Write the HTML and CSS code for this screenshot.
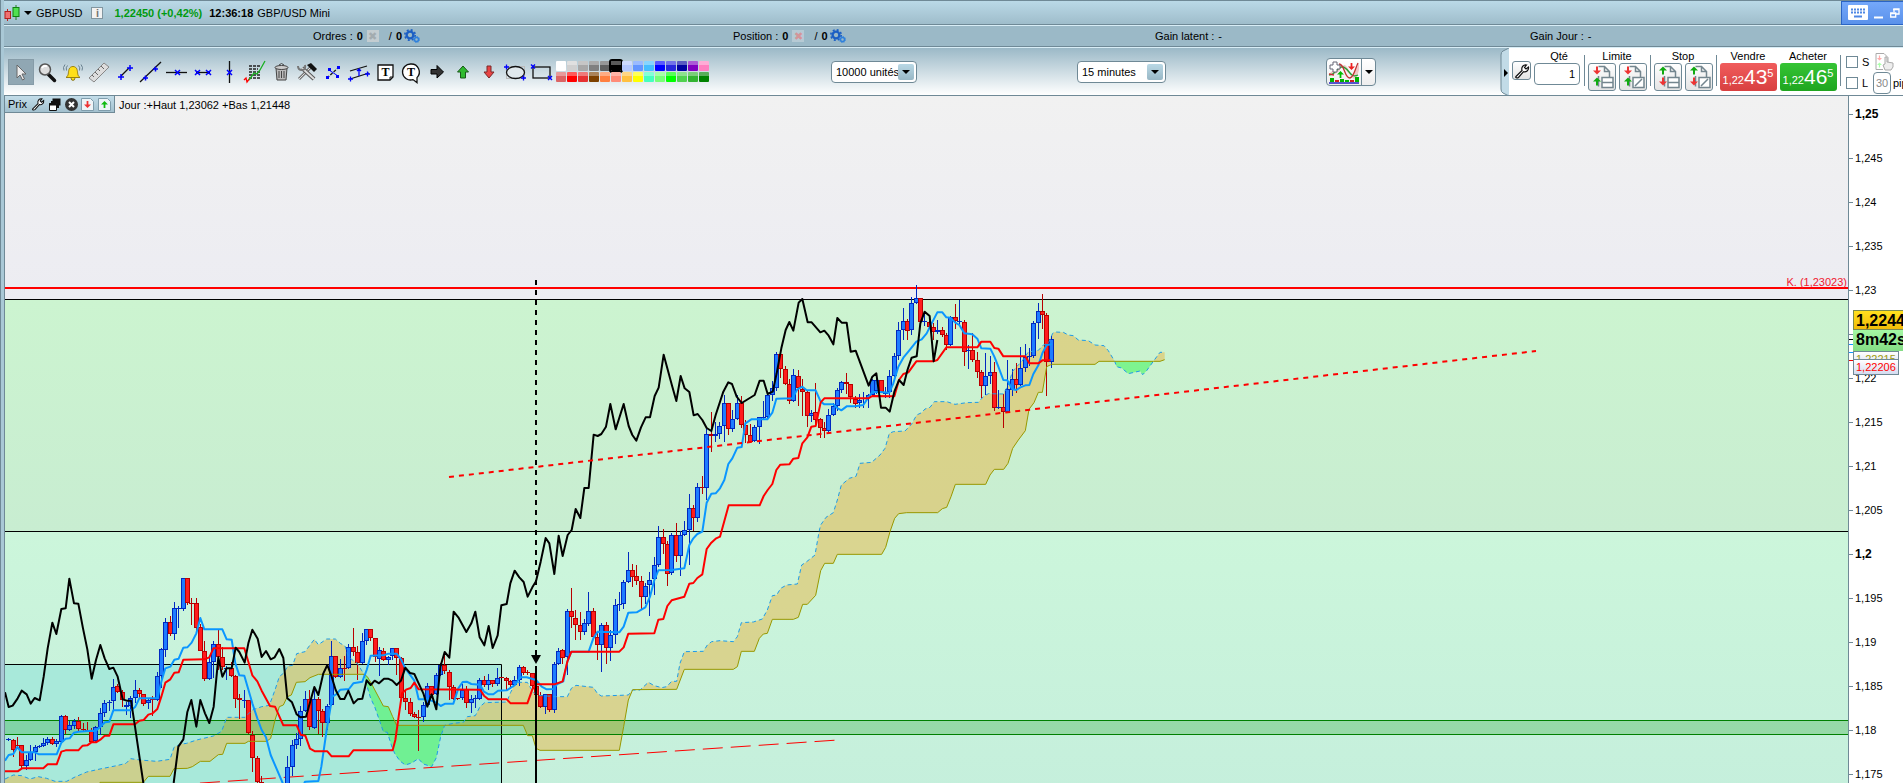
FILE: index.html
```html
<!DOCTYPE html>
<html lang="fr">
  <head>
    <meta charset="UTF-8" />
    <meta name="viewport" content="width=device-width, initial-scale=1.0" />
    <title>GBPUSD - GBP/USD Mini</title>
    <link rel="stylesheet" href="styles.css">
  </head>
  <body>
    <svg class="defs" width="0" height="0">
      <symbol id="gears" viewBox="0 0 16 14">
        <circle cx="6" cy="6" r="3.4" fill="none" stroke="#1c5fc4" stroke-width="2.4" />
        <circle cx="6" cy="6" r="5.2" fill="none" stroke="#1c5fc4" stroke-width="1.6" stroke-dasharray="2 2.1" />
        <circle cx="12.5" cy="10.5" r="2" fill="none" stroke="#2f80dc" stroke-width="1.5" />
        <circle cx="12.5" cy="10.5" r="3.1" fill="none" stroke="#2f80dc" stroke-dasharray="1.2 1.2" />
      </symbol>
      <symbol id="wrench" viewBox="0 0 16 16">
        <path d="M2 13.5 L8 7.5 C7 4 9.500 1.500 12.500 2 L10.500 4.500 L12 6 L14.500 4 C15 7.500 12 9.500 9.500 8.700 L4.500 14.500 C3 15.500 1 14.500 2 13.500 Z" fill="#fff" stroke="#111" stroke-width="1.2" />
      </symbol>
      <symbol id="down" viewBox="0 0 8 8"><path d="M3 0h2v4h3L4 8 0 4h3z" /></symbol>
      <symbol id="up" viewBox="0 0 8 8"><path d="M4 0l4 4H5v4H3V4H0z" /></symbol>
      <symbol id="page" viewBox="0 0 24 24">
        <path d="M8.500 1.500h6l5 5V20M14.500 1.500v5h5M8.500 11v10.500" fill="none" stroke="#74868f" stroke-width="1.5" />
      </symbol>
    </svg>

    <header class="titlebar">
      <svg class="logo" viewBox="0 0 16 16" width="16" height="16">
        <path d="M3.500 4v12" stroke="#c02020" />
        <rect x="1" y="6.500" width="5.500" height="7" fill="#f07070" stroke="#b02020" />
        <path d="M12 0v15" stroke="#208020" />
        <rect x="9" y="2.500" width="6" height="9" fill="#50e050" stroke="#108010" />
      </svg>
      <span class="caret"></span>
      <span class="symbol">GBPUSD</span>
      <button class="info" aria-label="Info">i</button>
      <strong class="quote">1,22450 (+0,42%)</strong>
      <strong class="clock">12:36:18</strong>
      <span>GBP/USD Mini</span>
      <div class="window-buttons">
        <button aria-label="Clavier">
          <svg viewBox="0 0 20 15" width="20" height="15">
            <rect width="20" height="15" rx="1" fill="#fff" />
            <path d="M3 4.500h14M3 7.500h14" stroke="#4f87e4" stroke-width="2" stroke-dasharray="2 1" />
            <path d="M6 11.500h8" stroke="#4f87e4" stroke-width="2" />
          </svg>
        </button>
        <button aria-label="Réduire">
          <svg viewBox="0 0 10 12" width="10" height="12"><path d="M0 10.500h9" stroke="#fff" stroke-width="2" /></svg>
        </button>
        <button aria-label="Restaurer">
          <svg viewBox="0 0 10 10" width="10" height="10"><path d="M4 4V1h5v5H6M3 1.500h6M.7 5h5v4h-5zM.7 5.500h5" fill="none" stroke="#fff" stroke-width="1.300" /></svg>
        </button>
      </div>
    </header>

    <section class="account">
      <div class="account-item">
        <span>Ordres :</span> <strong>0</strong>
        <span class="cancel">✖</span>
        <span>/</span> <strong>0</strong>
        <svg width="16" height="14"><use href="#gears" /></svg>
      </div>
      <div class="account-item">
        <span>Position :</span> <strong>0</strong>
        <span class="cancel cancel-red">✖</span>
        <span>/</span> <strong>0</strong>
        <svg width="16" height="14"><use href="#gears" /></svg>
      </div>
      <div class="account-item"><span>Gain latent :</span> <span>-</span></div>
      <div class="account-item"><span>Gain Jour :</span> <span>-</span></div>
    </section>

    <section class="toolbar">
      <div class="tools">
        <button class="tool active" aria-label="Curseur">
          <svg viewBox="0 0 24 24"><path d="M8 5v13l3-3 2.500 5 2-1-2.500-5h4z" fill="#eee" stroke="#666" /></svg>
        </button>
        <button class="tool" aria-label="Loupe">
          <svg viewBox="0 0 24 24"><path d="M13.500 14.500l6 6" stroke="#111" stroke-width="3.500" stroke-linecap="round" /><circle cx="10" cy="9.500" r="5.500" fill="#ddd" stroke="#555" stroke-width="1.500" /><path d="M7 8a3.500 3.500 0 0 1 5-1.500" fill="none" stroke="#fff" stroke-width="2" /></svg>
        </button>
        <button class="tool" aria-label="Alerte">
          <svg viewBox="0 0 24 24"><circle cx="12" cy="18.500" r="1.800" fill="#ffe61e" stroke="#86700a" /><path d="M5 17.500c3-2 2-5 3-8 1-4 7-4 8 0 1 3 0 6 3 8z" fill="#ffdf18" stroke="#9a8010" /><path d="M6.500 5.500q-2 2-1 5M4 4.500q-2.500 3-1 6M17.500 5.500q2 2 1 5M20 4.500q2.500 3 1 6" fill="none" stroke="#68808e" /></svg>
        </button>
        <button class="tool" aria-label="Règle">
          <svg viewBox="0 0 24 24"><path d="M2 18L17 3l5 4L7 22z" fill="#ddd" stroke="#888" /><path d="M5 15l2 2M8 12l3 3M11 9l2 2M14 6l3 3" stroke="#666" /></svg>
        </button>
        <button class="tool" aria-label="Segment">
          <svg viewBox="0 0 24 24"><path d="M8 16l8-8" stroke="#111" stroke-width="1.300" /><path d="M5 17h6M8 14v6M14 8h6M17 5v6" stroke="#00f" stroke-width="1.500" /></svg>
        </button>
        <button class="tool" aria-label="Droite">
          <svg viewBox="0 0 24 24"><path d="M1 22L22 2" stroke="#111" stroke-width="1.300" /><path d="M4 18h5M6.500 15.500v5M14 9h5M16.500 6.500v5" stroke="#00f" stroke-width="1.500" /></svg>
        </button>
        <button class="tool" aria-label="Horizontale">
          <svg viewBox="0 0 24 24"><path d="M1 12.500h21" stroke="#111" stroke-width="1.300" /><path d="M10 10l5 5M10 15l5-5" stroke="#00f" stroke-width="1.500" /></svg>
        </button>
        <button class="tool" aria-label="Segment horizontal">
          <svg viewBox="0 0 24 24"><path d="M5 12.500h14" stroke="#111" stroke-width="1.300" /><path d="M4 10l5 5M4 15l5-5M15 10l5 5M15 15l5-5" stroke="#00f" stroke-width="1.500" /></svg>
        </button>
        <button class="tool" aria-label="Verticale">
          <svg viewBox="0 0 24 24"><path d="M12.500 1v22" stroke="#111" stroke-width="1.300" /><path d="M10 10l5 5M10 15l5-5" stroke="#00f" stroke-width="1.500" /></svg>
        </button>
        <button class="tool" aria-label="Analyse">
          <svg viewBox="0 0 24 24"><path d="M6 6h12M6 9h9M6 12h12M6 15h12M6 18h12" stroke="#222" stroke-width="1.400" stroke-dasharray="3 1" /><path d="M1 20l2-2 1 4 3-4" fill="none" stroke="red" stroke-width="1.300" /><path d="M6 20l5-7 3 1 3-4 5-9" fill="none" stroke="#18b020" stroke-width="1.300" /></svg>
        </button>
        <button class="tool" aria-label="Supprimer">
          <svg viewBox="0 0 24 24"><path d="M7 8l1 12h9l1-12z" fill="#bbb" stroke="#444" /><ellipse cx="12.500" cy="7.500" rx="6.500" ry="2" fill="#ccc" stroke="#444" /><path d="M10 5q2.500-3 5 0M10 11v7M12.500 11v7M15 11v7" fill="none" stroke="#444" /></svg>
        </button>
        <button class="tool" aria-label="Outils">
          <svg viewBox="0 0 24 24"><path d="M4 19L17 6" stroke="#777" stroke-width="3" /><path d="M4 19L17 6" stroke="#ddd" /><path d="M7 8L19 19" stroke="#555" stroke-width="4" /><path d="M7 8L19 19" stroke="#ddd" stroke-width="2" /><path d="M3 6q0 4 4 4t3-5" fill="none" stroke="#777" stroke-width="2" /><path d="M12 5l4-2 6 6-3 3z" fill="#111" /></svg>
        </button>
        <button class="tool" aria-label="Régression">
          <svg viewBox="0 0 24 24"><path d="M6 18L18 7" stroke="#111" stroke-dasharray="3 1.500" stroke-width="1.300" /><path d="M8 10l9 6" stroke="#00f" /><path d="M5 16h3v3H5zM16 6h3v3h-3zM7 8h3v3H7zM15 15h3v3h-3z" fill="#00f" /></svg>
        </button>
        <button class="tool" aria-label="Canal">
          <svg viewBox="0 0 24 24"><path d="M3 11l17-5M3 19l19-6" stroke="#111" stroke-width="1.300" /><path d="M1 19h5M3.500 16.500v5M18 14h5M20.500 11.500v5M12 9v7M10 11l2-2 2 2" fill="none" stroke="#00f" stroke-width="1.300" /></svg>
        </button>
        <button class="tool" aria-label="Texte">
          <svg viewBox="0 0 24 24"><path d="M5 5h15v12l-3 3H5z" fill="#fff" stroke="#111" stroke-width="1.300" /><path d="M17 20v-3h3" fill="none" stroke="#111" /><text x="12.500" y="16" class="glyph">T</text></svg>
        </button>
        <button class="tool" aria-label="Bulle">
          <svg viewBox="0 0 24 24"><path d="M12 4a8 8 0 1 0 2 15.600l4 3v-5A8 8 0 0 0 12 4z" fill="#fff" stroke="#111" stroke-width="1.300" /><text x="12" y="16" class="glyph">T</text></svg>
        </button>
        <button class="tool" aria-label="Flèche droite">
          <svg viewBox="0 0 24 24"><path d="M6 9.500h6v-4l6.500 6.500-6.500 6v-4H6z" fill="#333" stroke="#000" /></svg>
        </button>
        <button class="tool" aria-label="Flèche haut">
          <svg viewBox="0 0 24 24"><path d="M12 6l5.500 6h-3v6h-5v-6h-3z" fill="#2fba2f" stroke="#185818" /></svg>
        </button>
        <button class="tool" aria-label="Flèche bas">
          <svg viewBox="0 0 24 24"><path d="M12 18l5-6h-3V6h-4v6H7z" fill="#e84444" stroke="#7a2828" /></svg>
        </button>
        <button class="tool" aria-label="Ellipse">
          <svg viewBox="0 0 24 24"><rect x="3.500" y="6.500" width="18" height="12" fill="none" stroke="#bbb" /><ellipse cx="12.500" cy="12.500" rx="9" ry="6" fill="#e0e8ec" stroke="#111" stroke-width="1.300" /><path d="M1 7h5M3.500 4.500v5M18 18h5M20.500 15.500v5" stroke="#00f" stroke-width="1.300" /></svg>
        </button>
        <button class="tool" aria-label="Rectangle">
          <svg viewBox="0 0 24 24"><rect x="4" y="7" width="17" height="11" fill="none" stroke="#111" stroke-width="1.300" /><path d="M2 4.500l4 4M2 8.500l4-4M19 16l4 4M19 20l4-4" stroke="#00f" stroke-width="1.400" /></svg>
        </button>
      </div>

      <div class="palette" id="palette"></div>

      <label class="combo combo-units">
        <select aria-label="Unités"><option>10000 unités</option></select>
        <span class="combo-arrow"></span>
      </label>
      <label class="combo combo-period">
        <select aria-label="Période"><option>15 minutes</option></select>
        <span class="combo-arrow"></span>
      </label>

      <div class="indicators">
        <button class="indicator-add" aria-label="Ajouter un indicateur">
          <svg viewBox="0 0 32 24" width="32" height="24">
            <path d="M1 14Q9 16 13 8t9 5 9-3V3l-7 14-12-13z" fill="#f0c8c8" />
            <path d="M1 15c7 0 8-9 14-8s7 12 15 8" fill="none" stroke="#20a030" stroke-width="1.300" />
            <path d="M1 14l5 1M11 4c6 0 5 14 11 14 4-1 5-9 8-15" fill="none" stroke="#c03030" stroke-width="1.300" />
            <path d="M5 2h4v3h3v4H9v3H5V9H2V5h3z" fill="#fff" stroke="#667" />
            <path d="M2 18h4v4H2zM12 19h4v3h-4zM17 20h4v2h-4zM27 17h4v5h-4z" fill="#00b400" />
            <path d="M7 20h4v2H7zM22 20h4v2h-4z" fill="#c22" />
            <path d="M1 23h30" stroke="#00b" stroke-width="1.300" />
            <use href="#up" x="9" y="11" width="7" height="7" fill="#0b0" />
            <use href="#down" x="20" y="3" width="7" height="7" fill="#e22" />
          </svg>
        </button>
        <button class="indicator-more" aria-label="Plus"><span class="caret"></span></button>
      </div>

      <div class="trade">
        <svg class="handle" viewBox="0 0 10 48" width="10" height="48">
          <path d="M9 0L3 3Q1 4 1 7V41Q1 44 3 45L9 48" fill="#c2dbe7" stroke="#6f8996" />
          <path d="M4 21l4 4-4 4z" />
        </svg>
        <button class="key small" aria-label="Réglages"><svg width="16" height="16"><use href="#wrench" /></svg></button>
        <div class="trade-group">
          <label for="qty">Qté</label>
          <input id="qty" class="qty" type="text" value="1" />
        </div>
        <div class="trade-group ruled">
          <span>Limite</span>
          <div class="keys">
            <button class="key" aria-label="Limite"><svg width="24" height="24"><use href="#page" /><use href="#down" x="3" y="1" width="8" height="9" fill="#e33" /><use href="#up" x="3" y="12" width="8" height="9" fill="#1a1" /><path d="M12 12.500h11v10H12zM12 17.500h11" fill="#fff" stroke="#74868f" stroke-width="1.500" /></svg></button>
            <button class="key" aria-label="Limite décalée"><svg width="24" height="24"><use href="#page" /><use href="#down" x="3" y="1" width="8" height="9" fill="#e33" /><use href="#up" x="3" y="12" width="8" height="9" fill="#1a1" /><path d="M12 12.500h11v10H12zM14 21l7-7" fill="#fff" stroke="#74868f" stroke-width="1.500" /></svg></button>
          </div>
        </div>
        <div class="trade-group ruled">
          <span>Stop</span>
          <div class="keys">
            <button class="key" aria-label="Stop"><svg width="24" height="24"><use href="#page" /><use href="#up" x="3" y="1" width="8" height="9" fill="#1a1" /><use href="#down" x="3" y="12" width="8" height="9" fill="#e33" /><path d="M12 12.500h11v10H12zM12 17.500h11" fill="#fff" stroke="#74868f" stroke-width="1.500" /></svg></button>
            <button class="key" aria-label="Stop décalé"><svg width="24" height="24"><use href="#page" /><use href="#up" x="3" y="1" width="8" height="9" fill="#1a1" /><use href="#down" x="3" y="12" width="8" height="9" fill="#e33" /><path d="M12 12.500h11v10H12zM14 21l7-7" fill="#fff" stroke="#74868f" stroke-width="1.500" /></svg></button>
          </div>
        </div>
        <div class="trade-group ruled market">
          <div class="side">
            <span>Vendre</span>
            <button class="price sell">1,22<b>43</b><i>5</i></button>
          </div>
          <div class="side">
            <span>Acheter</span>
            <button class="price buy">1,22<b>46</b><i>5</i></button>
          </div>
        </div>
        <div class="options">
          <div class="option">
            <input type="checkbox" id="optS" /><label for="optS">S</label>
            <svg class="ghost" viewBox="0 0 20 18" width="20" height="18">
              <path d="M1 .5h8l4 4V9M1 .5v16h7" fill="none" stroke="#aaa" />
              <use href="#down" x="2" y="2" width="5" height="6" fill="#faa" /><use href="#up" x="2" y="9" width="5" height="6" fill="#afa" />
              <path d="M10 17l-2-5 2-1V4h2v5l6 1v4l-2 3z" fill="#eee" stroke="#aaa" />
            </svg>
          </div>
          <div class="option">
            <input type="checkbox" id="optL" /><label for="optL">L</label>
            <input class="pips" type="text" value="30" aria-label="pips" /><span>pips</span>
          </div>
        </div>
      </div>
    </section>

    <main class="chart">
      <div class="plot">
        <svg class="canvas" width="100%" height="100%">
          <defs>
            <linearGradient id="zoneTop" x1="0" y1="0" x2="0" y2="1"><stop offset="0" stop-color="#ccf4d0" /><stop offset="1" stop-color="#c8edd1" /></linearGradient>
            <linearGradient id="zoneLow" x1="0" y1="0" x2="0" y2="1"><stop offset="0" stop-color="#ccf6db" /><stop offset="1" stop-color="#c5efdc" /></linearGradient>
          </defs>
          <g transform="translate(-5 -96)">
            <rect x="0" y="299" width="120%" height="232" fill="url(#zoneTop)" />
            <rect x="0" y="531" width="120%" height="260" fill="url(#zoneLow)" />
            <rect x="0" y="664" width="501" height="200" class="box" />
            <g id="clouds"></g>
            <rect x="0" y="720" width="120%" height="14" class="band" />
            <path d="M0 299.500H4000M0 531.500H4000M0 664.500H501.500V900" class="level" />
            <path d="M0 720.500H4000M0 734.500H4000" class="band-edge" />
            <path d="M0 288H4000" class="resistance" />
            <path d="M172 785L838 740" class="trend-long" />
            <g id="candles" shape-rendering="crispEdges"></g>
            <g id="lines"></g>
            <path d="M449 477L1536 351" class="trend-dots" />
            <path d="M536 280V655" class="marker-dash" />
            <path d="M531 655h10l-5 9z" />
            <path d="M536 666V900" class="marker" />
          </g>
        </svg>
        <div class="legend">
          <div class="legend-tools">
            <span>Prix</span>
            <button aria-label="Paramètres"><svg width="14" height="14"><use href="#wrench" /></svg></button>
            <button aria-label="Détacher"><svg viewBox="0 0 13 13" width="13" height="13"><path d="M4.500.5h8v7h-8zM3 3h8v7H3z" fill="#111" /><path d="M1.500 5.500h7v7h-7z" fill="#fff" stroke="#111" /><path d="M1 6.500h8" stroke="#111" stroke-width="2" /></svg></button>
            <button aria-label="Fermer"><svg viewBox="0 0 13 13" width="13" height="13"><circle cx="6.500" cy="6.500" r="6.500" fill="#333" /><path d="M4 4l5 5M4 9l5-5" stroke="#fff" stroke-width="2" /></svg></button>
            <button aria-label="Descendre"><svg viewBox="0 0 13 13" width="13" height="13"><path d="M.5.5h9l3 3v9H.5z" fill="#eef4f7" stroke="#7f9dac" /><use href="#down" x="3" y="3" width="7" height="7" fill="#e33" /></svg></button>
            <button aria-label="Monter"><svg viewBox="0 0 13 13" width="13" height="13"><path d="M.5.5h9l3 3v9H.5z" fill="#eef4f7" stroke="#7f9dac" /><use href="#up" x="3" y="3" width="7" height="7" fill="#1b1" /></svg></button>
          </div>
          <span class="day-range">Jour :+Haut 1,23062 +Bas 1,21448</span>
        </div>
        <span class="level-label">K. (1,23023)</span>
      </div>
      <div class="axis">
        <ul class="scale">
          <li class="major">1,25</li>
          <li>1,245</li>
          <li>1,24</li>
          <li>1,235</li>
          <li>1,23</li>
          <li></li>
          <li>1,22</li>
          <li>1,215</li>
          <li>1,21</li>
          <li>1,205</li>
          <li class="major">1,2</li>
          <li>1,195</li>
          <li>1,19</li>
          <li>1,185</li>
          <li>1,18</li>
          <li>1,175</li>
        </ul>
        <svg class="axis-marks" width="4" height="40"><path d="M0 9.500h4" stroke="#000" /><path d="M0 14.500h4M0 22.500h4" stroke="#19f" /><path d="M0 30.500h4" stroke="#e00" /></svg>
        <div class="tags">
          <span class="tag tag-last">1,2244</span>
          <span class="tag tag-time">8m42s</span>
          <span class="tag tag-cloud">1,22215</span>
          <span class="tag tag-kijun">1,22206</span>
        </div>
      </div>
    </main>

    <script src="chart.js"></script>
  </body>
</html>
```
FILE: styles.css
```css
* {
  box-sizing: border-box;
}
body {
  margin: 0;
  height: 100vh;
  display: flex;
  flex-direction: column;
  overflow: hidden;
  padding-left: 4px;
  background: linear-gradient(to right, #6f8996 1px, #a9c8d6 1px) #a9c8d6;
  color: #000;
}
body,
button,
input,
select {
  font-family: "Liberation Sans", Arial, sans-serif;
  font-size: 11px;
}
button {
  padding: 0;
  border: none;
  background: none;
}
.defs {
  position: absolute;
}
.caret {
  border: 4px solid transparent;
  border-top: 4px solid #000;
  border-bottom: none;
}

/* title bar */
.titlebar {
  flex: none;
  height: 25px;
  display: flex;
  align-items: center;
  border-top: 1px solid #6f8996;
  border-bottom: 1px solid #6f8996;
  background: linear-gradient(#bad9e7, #9fbdcb);
}
.titlebar .caret {
  margin: 0 4px;
}
.info {
  width: 12px;
  height: 12px;
  margin: 0 11px 0 9px;
  border: 1px solid #8296a0;
  background: #f2f2f2;
  color: #777;
  font-weight: bold;
  line-height: 10px;
}
.quote {
  color: #009a10;
}
.clock {
  margin: 0 4px 0 7px;
}
.window-buttons {
  width: 62px;
  height: 24px;
  margin-left: auto;
  padding-left: 6px;
  display: flex;
  align-items: center;
  gap: 6px;
  overflow: hidden;
  border: 1px solid #2b64c4;
  border-right: none;
  background: linear-gradient(#75a8fa, #5a91ea);
}
.window-buttons button,
.window-buttons svg {
  flex: none;
  display: block;
}

/* account line */
.account {
  flex: none;
  height: 22px;
  padding-left: 309px;
  display: grid;
  grid-template-columns: 420fr 422fr 375fr 373fr;
  align-items: center;
  border-top: 1px solid #d8edf6;
  border-bottom: 1px solid #6f8996;
  background: #9bb9c7;
}
.account-item {
  display: flex;
  align-items: center;
  gap: 4px;
}
.account-item svg {
  margin-left: -2px;
}
.cancel {
  width: 12px;
  height: 12px;
  margin-right: 6px;
  background: #c3cdd1;
  color: #a3acb0;
  font-size: 11px;
  line-height: 12px;
  text-align: center;
}
.cancel-red {
  background: #b6cad4;
  color: #d39599;
}

/* drawing toolbar */
.toolbar {
  flex: none;
  height: 49px;
  padding-left: 4px;
  display: flex;
  align-items: center;
  border-top: 1px solid #d8edf6;
  border-bottom: 1px solid #6f8996;
  background: linear-gradient(#9bb9c7, #fff);
}
.tools {
  display: flex;
}
.tool {
  width: 26px;
  height: 26px;
}
.tool svg {
  display: block;
  width: 24px;
  height: 24px;
  margin: 0 auto;
}
.tool.active {
  background: #90a7b3;
  border: 1px solid #869ca8;
}
.glyph {
  font: bold 12px "Liberation Serif", serif;
  text-anchor: middle;
}
.palette {
  margin-left: 2px;
  display: grid;
  grid-template-columns: repeat(14, 10px);
  gap: 1px;
}
.swatch {
  height: 10px;
  border-radius: 1px;
  background-image: linear-gradient(rgba(255, 255, 255, 0.35) 45%, transparent 45%);
}
.swatch.selected {
  outline: 2px solid #000;
}
.combo {
  position: relative;
  height: 22px;
}
.combo select {
  width: 100%;
  height: 22px;
  padding: 0 4px;
  appearance: none;
  border: 1px solid #6f8996;
  border-radius: 4px;
  background: #fff;
  color: #000;
}
.combo-arrow {
  position: absolute;
  top: 3px;
  right: 3px;
  width: 16px;
  height: 16px;
  border-radius: 2px;
  background: linear-gradient(#b9d8e5, #98b7c5);
  pointer-events: none;
}
.combo-arrow::after {
  content: "";
  position: absolute;
  top: 6px;
  left: 4px;
  border: 4px solid transparent;
  border-top-color: #000;
  border-bottom: none;
}
.combo-units {
  width: 86px;
  margin-left: 122px;
}
.combo-period {
  width: 89px;
  margin-left: 160px;
}
.indicators {
  height: 28px;
  margin-left: 160px;
  display: flex;
  border: 1px solid #6f8996;
  border-radius: 4px;
  background: linear-gradient(#fff, #eee);
}
.indicator-add {
  width: 35px;
  border-right: 1px solid #6f8996;
}
.indicator-add svg {
  display: block;
  margin: 0 auto;
}
.indicator-more {
  width: 13px;
  display: flex;
  align-items: center;
  justify-content: center;
}

/* order panel */
.trade {
  align-self: stretch;
  width: 403px;
  margin-left: auto;
  display: flex;
  overflow: hidden;
  background: linear-gradient(to right, transparent 8px, #fff 8px);
}
.handle {
  flex: none;
}
.key {
  width: 28px;
  height: 28px;
  border: 1px solid #6f8996;
  border-radius: 3px;
  background: linear-gradient(#fff, #e4e4e4);
}
.key svg {
  display: block;
  margin: 0 auto;
}
.key.small {
  flex: none;
  width: 19px;
  height: 19px;
  margin: 13px 3px 0 2px;
}
.trade-group {
  flex: none;
  height: 48px;
  padding-top: 1px;
  display: flex;
  flex-direction: column;
  align-items: center;
  line-height: 14px;
}
.trade-group.ruled {
  width: 66px;
  position: relative;
}
.trade-group.ruled::before,
.options::before {
  content: "";
  position: absolute;
  left: 0;
  top: 7px;
  height: 31px;
  border-left: 1px solid #6f8996;
}
.trade-group.market {
  width: 124px;
  flex-direction: row;
  align-items: flex-start;
  justify-content: center;
  gap: 3px;
}
.side {
  width: 57px;
  text-align: center;
}
.side span {
  display: block;
}
.qty {
  width: 46px;
  height: 22px;
  margin-right: 4px;
  padding: 0 4px;
  border: 1px solid #6f8996;
  border-radius: 4px;
  text-align: right;
}
.keys {
  display: flex;
  gap: 3px;
}
.price {
  display: flex;
  width: 57px;
  height: 28px;
  align-items: flex-end;
  justify-content: center;
  padding-bottom: 5px;
  border-radius: 3px;
  color: #fff;
  line-height: 12px;
}
.price b {
  font-size: 21px;
  font-weight: normal;
  line-height: 19px;
}
.price i {
  align-self: flex-start;
  margin-top: 4px;
  font-style: normal;
}
.sell {
  background: linear-gradient(#f05c5c, #d84040);
}
.buy {
  background: linear-gradient(#35c435, #1fa51f);
}
.options {
  position: relative;
  flex: none;
  padding: 4px 0 0 6px;
}
.option {
  height: 20px;
  display: flex;
  align-items: center;
}
.option + .option {
  height: 22px;
}
.option label {
  width: 15px;
  padding-left: 4px;
}
.option input[type="checkbox"] {
  width: 12px;
  height: 12px;
  margin: 0;
  appearance: none;
  border: 1px solid #6f8996;
  background: #fff;
}
.ghost {
  margin-left: 2px;
}
.pips {
  width: 18px;
  height: 22px;
  margin-right: 2px;
  padding: 0;
  border: 1px solid #6f8996;
  border-radius: 4px;
  color: #888;
  text-align: center;
}

/* chart */
.chart {
  flex: 1;
  min-height: 0;
  display: flex;
  border-left: 1px solid #6f8996;
  background: #fff;
}
.plot {
  position: relative;
  flex: 1;
  overflow: hidden;
  background: linear-gradient(#f1f1f1, #ececf2 204px);
}
.canvas {
  position: absolute;
  top: 0;
  left: 0;
}
.legend {
  position: relative;
  display: flex;
  align-items: center;
  height: 17px;
}
.legend-tools {
  height: 17px;
  width: 110px;
  padding: 0 3px;
  display: flex;
  align-items: center;
  justify-content: space-between;
  border-right: 1px solid #6f8996;
  border-bottom: 1px solid #6f8996;
  background: linear-gradient(#c3dde9, #a2c0ce);
}
.legend-tools svg {
  display: block;
}
.day-range {
  margin-left: 4px;
}
.level-label {
  position: absolute;
  top: 180px;
  right: 1px;
  color: #f01830;
  line-height: 12px;
}
.axis {
  position: relative;
  width: 55px;
  overflow: hidden;
  border-left: 1px solid #6f8996;
}
.scale {
  margin: -4px 0 0;
  padding: 0;
  list-style: none;
}
.scale li {
  display: flex;
  align-items: center;
  gap: 2px;
  height: 44px;
}
.scale li::before {
  content: "";
  width: 4px;
  border-top: 1px solid #6f8996;
}
.scale .major {
  font-size: 12px;
  font-weight: bold;
}
.axis-marks {
  position: absolute;
  top: 234px;
  left: 0;
}
.tags {
  position: absolute;
  top: 214px;
  left: 4px;
  display: flex;
  flex-direction: column;
  align-items: flex-start;
}
.tag {
  height: 16px;
  padding: 0 2px;
  border: 1px solid #6f8996;
  line-height: 14px;
  background: linear-gradient(#fff, #d4dcf0);
}
.tag-last,
.tag-time {
  height: 20px;
  width: 60px;
  border-color: #7a8a50;
  font-size: 16px;
  font-weight: bold;
  line-height: 19px;
}
.tag-last {
  background: linear-gradient(#ffe01e, #f2bc08);
}
.tag-time {
  height: 21px;
  border: none;
  padding-left: 3px;
  background: linear-gradient(#a4f8a4, #84dc84);
}
.tag-cloud {
  color: #a09a10;
}
.tag-kijun {
  margin-top: -8px;
  color: #f00;
}

/* drawings */
.box {
  fill: #a8e9da;
}
.band {
  fill: rgba(40, 165, 50, 0.3);
}
.band-edge {
  stroke: #008000;
}
.level {
  fill: none;
  stroke: #000;
}
.resistance {
  stroke: #f00;
  stroke-width: 2;
}
.trend-dots {
  stroke: #f00;
  stroke-width: 2;
  stroke-dasharray: 5 5;
}
.trend-long {
  stroke: #f00;
  stroke-dasharray: 20 8;
}
.marker,
.marker-dash {
  stroke: #000;
  stroke-width: 2;
}
.marker-dash {
  stroke-dasharray: 5 5;
}
.cloud-up {
  fill: rgba(227, 192, 94, 0.6);
}
.cloud-down {
  fill: rgba(75, 245, 100, 0.6);
}
.line {
  fill: none;
  stroke-width: 2;
  stroke-linejoin: round;
}
.chikou {
  stroke: #000;
}
.tenkan {
  stroke: #0a96ff;
}
.kijun {
  stroke: #f00;
}
.span-a {
  stroke: #1e9be8;
  stroke-width: 1;
  stroke-dasharray: 4 3;
}
.span-b {
  stroke: #989800;
  stroke-width: 1;
}
.wick-u {
  fill: #0028c0;
}
.wick-d {
  fill: #b80000;
}
.body-u {
  fill: #1e7cff;
}
.body-d {
  fill: #ff1c1c;
}
```
FILE: chart.js
```js
const SVG = "http://www.w3.org/2000/svg";

// each block: origin x, origin y, then values in thirds of a pixel
// candle: x high top bottom low u|d
const candleBlocks = [
  [0, 560, `26 534 538 541 543 u,40 537 540 570 593 d,53 531 556 559 565 d,65 556 556 620 627 d,79 587 602 620 632 u,92 556 577 602 605 u,105 556 562 577 604 u,118 556 558 561 564 u,130 536 550 560 562 u,143 531 538 550 557 u,157 533 538 553 555 d,169 538 544 552 562 u,184 466 469 547 550 u,197 467 469 512 523 d,209 483 497 512 514 u,222 477 485 498 507 u,235 471 485 508 517 d,249 490 508 512 517 d,262 487 511 514 515 d,274 505 512 546 549 d,287 500 502 544 546 u,301 446 460 502 527 u,313 422 430 460 472 u,327 422 427 431 455 u,340 358 382 425 455 u,353 374 379 398 400 d,368 390 397 421 441 d,379 427 437 442 465 u,392 409 415 440 476 u,406 361 391 415 430 u,418 385 391 404 417 d,431 403 404 434 440 d,445 415 421 431 447 u,458 408 415 420 470 d,472 337 349 421 423 u,484 265 268 349 386 u,496 174 187 271 292 u,511 170 187 224 230 d,523 127 145 224 240 u,536 139 145 148 204 u,550 55 55 148 155 u,562 55 55 130 137 d,575 115 130 133 197 d,589 114 130 206 215 d,601 193 203 274 275 d,613 243 274 358 365 d,628 292 306 358 360 u,640 244 253 306 355 u,655 210 253 291 330 d,667 262 292 322 330 d,680 320 325 328 362 u,694 307 325 349 351 d,706 346 349 418 446 d,718 403 416 421 477 d,733 391 421 424 445 u,745 421 421 521 523 d,757 513 526 596 638 d,772 588 596 667 680 d,784 650 667 700 700 d,862 590 622 680 690 u,877 540 556 622 648 u,889 520 538 556 567 u`],
  [280, 560, `61 440 455 538 559 u,76 393 419 455 457 u,88 391 418 503 512 d,103 385 418 506 509 u,115 413 418 455 524 d,127 448 455 490 533 d,142 434 438 490 512 u,154 243 289 437 439 u,166 289 289 352 355 d,181 297 325 353 355 u,193 289 324 327 365 d,205 252 262 325 327 u,220 204 262 278 288 d,232 258 277 311 360 d,247 220 244 310 312 u,259 208 208 244 255 u,271 208 208 235 245 d,286 235 235 292 306 d,298 262 271 298 350 u,310 265 273 300 304 d,325 288 292 302 316 u,337 265 265 290 300 u,349 265 265 294 345 d,364 293 295 415 417 d,376 394 415 427 450 d,391 415 427 464 468 d,403 458 463 472 476 d,415 450 471 474 573 d,430 427 436 472 488 u,442 371 380 435 437 u,455 380 380 406 415 d,469 340 346 404 406 u,481 311 316 346 348 u,493 285 316 335 342 d,508 332 337 382 422 d,520 376 382 419 421 d,533 414 415 418 420 d,546 373 390 415 421 u,559 380 388 430 445 d,574 406 418 430 460 u,586 406 416 419 445 u,598 354 361 418 420 u,613 348 361 376 381 d,625 344 361 376 392 u,637 361 361 373 382 d,652 324 355 373 378 u,664 352 352 355 355 d,679 353 355 364 390 d,691 361 364 376 388 d,703 350 360 376 380 u,718 316 322 361 378 u,730 320 322 340 346 d,742 331 337 340 347 d,757 339 340 380 390 d,769 379 380 405 420 d,781 398 406 442 446 d,796 402 403 442 462 u,808 402 403 451 458 d,823 308 313 451 461 u,835 265 274 313 316 u,847 268 270 295 312 d,862 148 154 292 345 u,874 84 154 173 204 d`],
  [520, 480, `166 392 415 437 480 d,181 396 436 457 482 d,193 417 430 457 466 u,205 338 394 433 438 u,220 384 394 472 475 d,232 458 472 497 540 d,244 430 436 496 576 u,259 428 436 505 554 d,271 450 466 505 545 u,286 357 376 466 494 u,298 338 373 376 395 u,310 302 307 373 389 u,325 216 271 307 311 u,337 252 271 292 323 d,349 255 290 304 315 d,364 289 304 352 390 d,376 310 320 352 372 u,388 278 301 317 408 u,403 232 256 298 347 u,415 138 172 256 263 u,430 147 172 193 224 d,442 184 193 284 318 d,455 160 166 280 287 u,469 131 166 229 248 d,481 154 166 229 288 u,493 124 151 166 170 u,508 42 85 151 255 u,520 75 85 115 153 d`],
  [560, 330, `412 460 472 565 577 u,427 440 472 475 492 d,439 298 313 475 510 u,454 246 313 319 368 d,466 278 314 319 338 u,478 278 289 314 329 u,493 196 220 289 338 u,505 220 220 298 316 d,517 240 268 298 306 u,532 196 220 268 270 u,544 198 220 286 296 d,556 270 286 316 340 d,571 282 316 338 340 d,583 286 292 335 338 u,598 262 262 292 344 u,610 214 262 265 268 u,622 193 196 262 270 u,637 155 175 196 214 u`],
  [700, 270, `229 248 253 355 365 u,242 250 253 298 326 d,256 288 298 343 347 d,268 327 343 394 402 d,280 298 316 394 398 u,295 300 319 355 410 d,307 327 357 367 440 d,322 360 367 440 473 d,334 422 430 440 456 u,346 340 427 452 468 d,361 444 448 475 506 d,373 458 475 485 506 d,385 418 436 485 494 u,400 400 409 436 440 u,412 356 361 409 425 u,424 333 337 361 370 u,439 309 337 344 373 d,451 343 343 382 400 d,466 380 388 402 416 d,478 374 390 400 416 u,490 368 385 388 416 u,505 372 376 385 416 u,517 327 331 376 380 u,530 316 331 365 374 u,543 330 331 366 370 d,556 352 367 373 386 u,568 300 319 368 386 u,583 250 259 319 322 u,595 157 181 259 270 u,610 116 154 181 210 u,622 147 154 184 210 d,634 82 100 181 196 u,649 45 85 100 102 u,661 85 85 157 160 d,673 125 155 158 168 u,688 154 157 173 175 d,700 160 173 187 211 d,712 150 182 188 194 u,727 172 181 196 203 d,739 190 196 227 242 d,751 140 142 227 230 u,766 102 142 155 178 d,778 90 155 158 170 u,793 151 157 247 288 d,805 225 241 244 297 u,817 190 241 271 276 d,832 248 271 307 326 d,844 300 307 349 384 d,856 249 320 349 375 u,871 258 307 320 342 u,883 278 307 415 425 d`],
  [960, 270, `115 360 411 414 418 u,130 374 412 427 474 d,142 270 358 427 430 u,157 297 328 361 378 u,169 280 328 346 370 d,181 231 295 346 350 u,196 222 262 295 308 u,208 236 259 262 288 u,220 154 160 260 264 u,235 99 124 160 208 u,247 72 124 136 177 d,259 130 136 277 378 d,274 198 208 278 294 u`]
];

const chikou = [
  [0, 560, "15,397 26,441 38,437 53,415 65,392 80,403 92,431 104,414 119,421 131,350 143,265 157,188 169,222 184,147 197,145 208,56 222,130 235,131 249,205 262,268 275,356 288,300 301,255 314,295 328,327 340,323 353,350 368,418 380,422 393,422 405,500 430,669 445,760 505,760 521,669 535,560 550,538 562,456 574,420 589,500 601,420 615,460 628,489 641,440 655,292 667,350 680,325 695,325 707,263 718,276 734,308 745,250 757,209 773,236 785,291 798,273 812,298 824,292 838,267 850,294 862,415 876,427 890,463"],
  [280, 560, "61,472 78,470 103,381 115,405 130,340 142,315 155,350 167,390 181,417 193,417 205,392 221,430 233,418 247,416 260,361 272,375 284,362 297,370 312,356 324,356 337,362 350,375 363,362 376,323 390,339 403,342 416,370 430,400 442,440 455,403 469,448 481,320 494,276 508,293 521,155 535,172 559,216 574,190 586,155 599,232 613,256 626,198 638,264 653,226 664,136 680,132 691,70 704,32 718,52 731,66 743,110 757,82"],
  [520, 480, "48,304 62,245 77,174 88,190 103,282 116,167 128,228 143,165 155,150 167,87 181,114 193,24"],
  [560, 330, "86,474 101,314 113,318 124,312 138,290 151,222 167,298 191,222 206,288 217,315 229,332 243,292 257,262 270,262 284,198 296,173 311,74 337,170 349,213 362,138 374,175 388,186 401,256 413,252 427,270 440,294 454,303 467,255 490,185 505,157 516,162 530,200 545,219 584,195 599,152 611,152 623,192"],
  [700, 270, "218,365 230,310 244,235 257,180 268,156 280,182 296,98 307,87 323,157 335,157 361,187 373,182 386,197 400,223 412,144 425,158 440,158 452,245 467,242 506,347 517,320 529,310 543,413 557,413 569,425 583,365 597,330 611,345 623,298 635,263 650,259 661,160 674,125 689,138 701,274 712,210"]
];

const tenkan = [
  [0, 560, "15,602 26,585 40,582 52,561 65,577 105,577 117,583 170,583 184,548 197,536 209,535 222,518 235,515 274,512 287,513 301,500 315,487 328,485 340,451 393,451 406,440 418,415 472,415 484,365 496,325 511,320 523,299 536,296 550,263 562,262 575,248 589,220 601,174 613,208 667,208 680,238 695,239 706,310 718,346 733,347 757,430 772,475 785,510 798,532 812,585 848,669 870,700 900,700"],
  [280, 560, "75,665 115,663 124,620 140,510 157,410 170,402 181,389 207,387 220,370 247,365 260,330 272,287 310,286 325,281 350,281 363,298 376,325 403,362 416,418 443,418 470,428 482,438 496,431 520,431 535,385 548,366 560,365 574,372 600,374 612,395 626,403 640,403 654,392 680,391 705,375 720,352 740,352"],
  [520, 480, "48,600 65,620 80,628 100,627 112,612 130,604 142,545 154,515 206,515 220,475 233,455 298,457 311,440 325,398 350,397 376,382 390,350 403,300 415,271 455,270 493,265 508,195 520,175 532,162 547,155"],
  [560, 330, "440,518 454,491 467,490 480,475 493,450 505,402 517,385 532,353 545,351 556,280 574,268 622,268 637,248 649,206 697,205 712,178 727,170 740,181 767,181 782,215 793,223 820,223 832,234"],
  [700, 270, "424,421 440,409 466,409 490,405 503,385 517,366 540,366 568,368 580,340 595,290 610,263 625,245 649,215 665,208 680,190 690,170 712,127 727,127 739,142 751,143 766,158 778,165 793,190 817,193 832,206 844,235 871,236"],
  [960, 270, "103,260 115,290 130,330 142,331 157,358 169,360 181,352 196,346 208,345 220,312 235,286 247,250 260,225 275,223"]
];

const kijun = [
  [0, 560, "15,634 53,634 66,625 130,625 143,613 170,613 184,575 197,571 235,571 248,557 262,556 274,547 288,547 301,539 314,527 328,527 340,493 405,493 418,482 431,480 445,464 458,460 472,447 484,410 496,368 511,358 523,338 536,337 550,299 613,298 628,292 640,265 733,265 745,305 757,346 772,364 785,392 810,438 825,440"],
  [280, 560, "10,496 50,496 62,524 76,527 90,566 105,574 142,574 155,589 206,589 220,571 338,571 346,540 356,470 366,400 378,389 392,384 403,368 416,388 600,389 612,407 625,418 680,418 692,430 742,430 757,388"],
  [520, 480, "48,613 103,613 128,604 142,545 154,515 298,515 311,502 325,461 403,460 415,419 430,417 442,378 455,361 493,350 508,311 520,309 532,294 547,283 560,207 574,188 587,176 600,170 626,76"],
  [560, 330, "599,526 611,498 623,480 637,462 649,420 661,404 688,403 700,386 715,384 727,340 742,322 754,290 767,288 782,217"],
  [700, 270, "373,385 505,385 517,378 583,379 597,330 610,312 625,307 649,274 700,274 712,270 739,232 832,232 844,215 871,215 883,234"],
  [960, 270, "115,236 130,259 196,259 208,280 235,280 247,271 272,271"]
];

const spanA = [
  [0, 560, "15,657 40,645 65,647 90,657 115,650 140,655 165,664 200,664 225,651 260,636 300,627 350,617 378,610 392,596 420,600 470,604 510,598 522,562 540,553 560,550 590,540 640,528 665,514 680,472 735,472 757,450 785,440 808,436 825,390 838,350 850,340 864,318 878,316"],
  [280, 560, "50,281 75,275 103,238 115,254 140,237 166,237 181,250 195,258 205,290 220,302 232,310 252,343 260,375 272,415 284,440 310,515 322,517 337,565 345,582 360,603 376,615 395,609 415,596 430,612 455,620 469,593 482,530 494,496 520,490 550,487 562,470 586,467 600,440 614,428 680,426 692,397 705,372 718,367 742,367 757,393"],
  [520, 480, "50,646 110,650 142,650 154,625 168,616 220,622 232,640 244,648 300,646 325,645 338,630 360,630 385,607 403,617 425,623 440,620 455,604 470,604 480,550 493,515 550,514 562,495 575,485 600,482 640,485 652,470 664,428 700,426 727,417 742,390 757,347 770,345 782,325 800,315 832,312 845,255 860,245 885,225"],
  [800, 400, "57,396 62,375 78,352 100,338 112,300 124,255 148,235 168,229 180,190 215,187 240,165 255,145 268,100 280,95 315,93 335,72 350,45 365,38 375,27 390,22"],
  [700, 270, "703,395 740,395 765,403 800,398 835,397 850,380"],
  [960, 270, "85,371 130,372 145,345 157,305 170,290 185,275 205,246 235,241 250,225 265,220 278,190 285,186 310,187 325,195 340,197 355,210 385,212 405,225 432,227 445,242 464,274 470,290 485,294 505,311 540,303 548,314 560,302 580,274 600,247 614,247"]
];

const spanB = [
  [0, 560, "15,680 290,680 300,667 430,667 445,649 510,649 522,626 562,625 577,620 601,604 630,604 655,584 668,583 680,550 735,550 745,544 800,544 812,535 825,480 838,440 850,435"],
  [280, 560, "22,410 34,405 49,367 75,365 90,353 115,343 252,343 262,350 275,372 310,438 325,440 338,470 350,496 494,496 730,496 743,527 757,527 768,565"],
  [520, 480, "60,811 298,811 311,740 325,660 338,629 470,628 493,568 640,568 652,560 664,514 703,514 718,475 730,462 742,460 757,418 820,418 835,412 848,373 862,373"],
  [800, 400, "47,586 62,512 74,490 100,490 112,463 245,463 257,442 270,395 284,355 296,341 320,338 413,338 427,326 440,322 453,290 466,253 557,253 570,225 583,208 611,208 624,190 638,145 655,120 676,92 687,28"],
  [960, 270, "222,398 235,367 247,367 260,290 275,283 405,283 417,274 464,274 580,274 600,274 614,269"]
];

const colors = [
  "#ffffff", "#d0d0d0", "#a8a8a8", "#808080", "#606060", "#000000", "#b4c8ff",
  "#6496ff", "#46beff", "#0000ff", "#2828dc", "#0000a0", "#8000c0", "#ff80c0",
  "#dc6464", "#ff0000", "#e63232", "#7d4100", "#ff8040", "#ff8c78", "#ffc040",
  "#ffff00", "#46ffbe", "#78ff78", "#00ff00", "#50d250", "#32b432", "#008200"
];

function add(parent, tag, attrs) {
  const el = document.createElementNS(SVG, tag);
  for (const name in attrs) {
    el.setAttribute(name, attrs[name]);
  }
  document.getElementById(parent).appendChild(el);
}

function toPoints(blocks) {
  const points = [];
  for (const [ox, oy, text] of blocks) {
    for (const pair of text.split(" ")) {
      const [x, y] = pair.split(",").map(Number);
      points.push([ox + x / 3, oy + y / 3]);
    }
  }
  return points;
}

function drawLine(blocks, name) {
  add("lines", "polyline", { points: toPoints(blocks).join(" "), class: "line " + name });
}

function drawCloud(from, to, name) {
  const inside = (p) => p[0] >= from - 0.5 && p[0] <= to + 0.5;
  const top = toPoints(spanA).filter(inside);
  const bottom = toPoints(spanB).filter(inside).reverse();
  add("clouds", "polygon", { points: top.concat(bottom).join(" "), class: name });
}

function drawCandles() {
  for (const [ox, oy, text] of candleBlocks) {
    for (const row of text.split(",")) {
      const [x, high, top, bottom, low, dir] = row.split(" ");
      const cx = Math.floor(ox + x / 3);
      const yHigh = Math.floor(oy + high / 3);
      const yTop = Math.floor(oy + top / 3);
      const yBottom = Math.max(Math.floor(oy + bottom / 3), yTop + 1);
      const yLow = Math.floor(oy + low / 3);
      add("candles", "rect", { x: cx, y: yHigh, width: 1, height: Math.max(yLow - yHigh, 1), class: "wick-" + dir });
      add("candles", "rect", { x: cx - 2, y: yTop, width: 5, height: yBottom - yTop, class: "wick-" + dir });
      if (yBottom - yTop > 2) {
        add("candles", "rect", { x: cx - 1, y: yTop + 1, width: 3, height: yBottom - yTop - 2, class: "body-" + dir });
      }
    }
  }
}

drawCloud(0, 364, "cloud-up");
drawCloud(364, 444.7, "cloud-down");
drawCloud(444.7, 1114.7, "cloud-up");
drawCloud(1114.7, 1153.3, "cloud-down");
drawCloud(1153.3, 1170, "cloud-up");
drawCandles();
drawLine(spanA, "span-a");
drawLine(spanB, "span-b");
drawLine(tenkan, "tenkan");
drawLine(kijun, "kijun");
drawLine(chikou, "chikou");

for (const color of colors) {
  const swatch = document.createElement("button");
  swatch.className = color === "#000000" ? "swatch selected" : "swatch";
  swatch.style.backgroundColor = color;
  swatch.setAttribute("aria-label", color);
  document.getElementById("palette").appendChild(swatch);
}
```
